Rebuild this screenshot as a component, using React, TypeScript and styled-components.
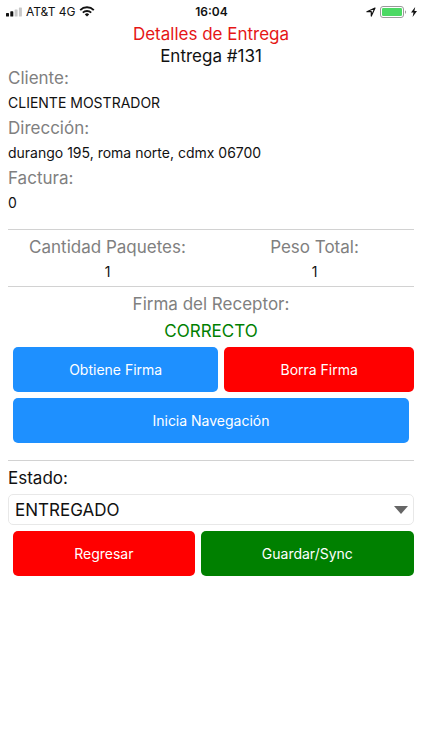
import React from "react";
import styled, { createGlobalStyle } from "styled-components";

const GlobalStyle = createGlobalStyle`
  * { box-sizing: border-box; }
  body {
    margin: 0;
    background: #fff;
    color: #111;
    font-family: Inter, "Liberation Sans", sans-serif;
  }
`;

const StatusBar = styled.header`
  display: grid;
  grid-template-columns: 1fr auto 1fr;
  align-items: center;
  height: 23px;
  padding: 0 5px 0 6px;
  font-size: 12px;
  line-height: 22px;
`;

const StatusGroup = styled.div<{ $end?: boolean }>`
  display: flex;
  align-items: center;
  gap: 4px;
  justify-content: ${(p) => (p.$end ? "flex-end" : "flex-start")};
`;

const Clock = styled.time`
  font-weight: 600;
`;

const Screen = styled.main`
  padding: 0 8px;
`;

const Heading = styled.h1<{ $color?: string }>`
  margin: 0;
  font-size: 17px;
  font-weight: 400;
  line-height: 22px;
  text-align: center;
  color: ${(p) => p.$color ?? "#111"};
`;

const Details = styled.dl<{ $columns?: boolean }>`
  display: grid;
  grid-template-columns: ${(p) => (p.$columns ? "1fr 1fr" : "1fr")};
  margin: ${(p) => (p.$columns ? "0 -4px" : "0")};
  text-align: ${(p) => (p.$columns ? "center" : "left")};
`;

const Term = styled.dt`
  font-size: 17px;
  line-height: 22px;
  color: #808080;
`;

const Value = styled.dd`
  margin: 0;
  font-size: 14px;
  line-height: 28px;
`;

const Divider = styled.hr<{ $before: number }>`
  height: 1px;
  margin: ${(p) => p.$before}px 0 6px;
  border: 0;
  background: #d2d2d2;
`;

const Signature = styled.section`
  font-size: 17px;
  line-height: 22px;
  text-align: center;
  color: #808080;
`;

const SignatureState = styled.output`
  display: block;
  line-height: 32px;
  color: #008000;
`;

const ButtonRow = styled.div<{ $inset?: boolean }>`
  display: flex;
  gap: 6px;
  margin: 0 ${(p) => (p.$inset ? 5 : 0)}px 6px 5px;
`;

const Button = styled.button<{ $color: string }>`
  flex: 1 1 auto;
  height: 45px;
  padding: 0 8px;
  border: 0;
  border-radius: 5px;
  background: ${(p) => p.$color};
  color: #fff;
  font: inherit;
  font-size: 14px;
`;

const SelectLabel = styled.label`
  display: block;
  margin-bottom: 5px;
  font-size: 17px;
  line-height: 22px;
`;

const SelectBox = styled.div`
  position: relative;
  margin-bottom: 6px;
`;

const Select = styled.select`
  appearance: none;
  display: block;
  width: 100%;
  height: 31px;
  padding: 0 32px 0 6px;
  border: 1px solid #e8e8e8;
  border-radius: 5px;
  background: #fff;
  color: #111;
  font: inherit;
  font-size: 17px;
`;

const Arrow = styled.svg`
  position: absolute;
  top: 12px;
  right: 6px;
  pointer-events: none;
`;

const BLUE = "#1e90ff";
const RED = "#ff0000";
const GREEN = "#008000";

const SignalIcon = () => (
  <svg width="16" height="10" viewBox="0 0 16 10" aria-hidden="true">
    <rect x="0" y="6" width="3" height="3.5" rx=".6" fill="#111" />
    <rect x="4.3" y="4.3" width="3" height="5.2" rx=".6" fill="#111" />
    <rect x="8.6" y="2.4" width="3" height="7.1" rx=".6" fill="#c8c8c8" />
    <rect x="12.9" y=".4" width="3" height="9.1" rx=".6" fill="#c8c8c8" />
  </svg>
);

const WifiIcon = () => (
  <svg width="16" height="11" viewBox="0 0 16 11" fill="none" stroke="#111" aria-hidden="true">
    <path d="M1.2 4.1a9.8 9.8 0 0 1 13.6 0" strokeWidth="2" />
    <path d="M3.8 6.7a6.1 6.1 0 0 1 8.4 0" strokeWidth="1.8" />
    <path d="M8 10.6 5.8 8.4a3.2 3.2 0 0 1 4.4 0Z" fill="#111" stroke="none" />
  </svg>
);

const LocationIcon = () => (
  <svg width="10" height="10" viewBox="0 0 10 10" fill="none" aria-hidden="true">
    <path d="M.9 4.7 9 1 5.3 9.1V4.7Z" stroke="#111" strokeWidth="1.2" strokeLinejoin="round" />
  </svg>
);

const BatteryIcon = () => (
  <svg width="27" height="12" viewBox="0 0 27 12" aria-hidden="true">
    <rect x=".5" y=".5" width="23" height="11" rx="2.5" fill="#fff" stroke="#9a9a9a" />
    <rect x="2" y="2" width="20" height="8" rx="1.2" fill="#4cd964" />
    <path d="M25 4.2c1.4.5 1.4 3.1 0 3.6Z" fill="#9a9a9a" />
  </svg>
);

const BoltIcon = () => (
  <svg width="6" height="10" viewBox="0 0 6 10" aria-hidden="true">
    <path d="M4.2 0 0 5.6h2.5L1.6 10 6 4H3.4Z" fill="#111" />
  </svg>
);

export default function App() {
  return (
    <>
      <GlobalStyle />
      <StatusBar>
        <StatusGroup>
          <SignalIcon />
          <span>AT&amp;T 4G</span>
          <WifiIcon />
        </StatusGroup>
        <Clock>16:04</Clock>
        <StatusGroup $end>
          <LocationIcon />
          <BatteryIcon />
          <BoltIcon />
        </StatusGroup>
      </StatusBar>
      <Screen>
        <Heading $color="#e51616">Detalles de Entrega</Heading>
        <Heading as="h2">Entrega #131</Heading>
        <Details>
          <Term>Cliente:</Term>
          <Value>CLIENTE MOSTRADOR</Value>
          <Term>Dirección:</Term>
          <Value>durango 195, roma norte, cdmx 06700</Value>
          <Term>Factura:</Term>
          <Value>0</Value>
        </Details>
        <Divider $before={12} />
        <Details $columns>
          <div>
            <Term>Cantidad Paquetes:</Term>
            <Value>1</Value>
          </div>
          <div>
            <Term>Peso Total:</Term>
            <Value>1</Value>
          </div>
        </Details>
        <Divider $before={0} />
        <Signature>
          <label htmlFor="firma">Firma del Receptor:</label>
          <SignatureState id="firma">CORRECTO</SignatureState>
        </Signature>
        <ButtonRow>
          <Button type="button" $color={BLUE}>Obtiene Firma</Button>
          <Button type="button" $color={RED}>Borra Firma</Button>
        </ButtonRow>
        <ButtonRow $inset>
          <Button type="button" $color={BLUE}>Inicia Navegación</Button>
        </ButtonRow>
        <Divider $before={17} />
        <SelectLabel htmlFor="estado">Estado:</SelectLabel>
        <SelectBox>
          <Select id="estado" defaultValue="ENTREGADO">
            <option>ENTREGADO</option>
          </Select>
          <Arrow width="14" height="8" viewBox="0 0 14 8" aria-hidden="true">
            <path d="M0 0h14L7 8Z" fill="#666" />
          </Arrow>
        </SelectBox>
        <ButtonRow>
          <Button type="button" $color={RED}>Regresar</Button>
          <Button type="button" $color={GREEN}>Guardar/Sync</Button>
        </ButtonRow>
      </Screen>
    </>
  );
}
